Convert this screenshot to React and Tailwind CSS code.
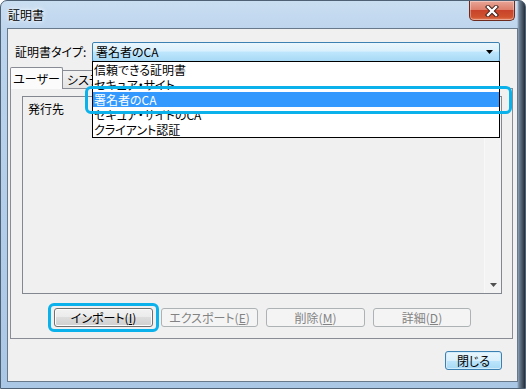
export default function App() {
  const items = ["信頼できる証明書", "セキュア・サイト", "署名者のCA", "セキュア・サイトのCA", "クライアント認証"];
  return (
    <div className="relative w-[526px] h-[389px] overflow-hidden rounded-t-[7px] border border-[#4e6175] bg-[linear-gradient(90deg,transparent_516px,#71859a_518px,#252e38_524px),linear-gradient(180deg,#cadef1_0%,#bcd4ed_8%,#aac7e6_100%)] font-['Noto_Sans_CJK_JP',sans-serif] text-[12px] text-black [font-feature-settings:'palt']">
      {/* title bar */}
      <div className="h-[27px] flex items-center pl-[7px]">
        <span className="text-[12px] leading-none [text-shadow:0_0_6px_#ffffff,0_0_3px_#ffffff]">証明書</span>
      </div>
      {/* close button */}
      <div className="absolute top-0 right-[10px] w-[46px] h-[20px] rounded-b-[5px] border border-t-0 border-[#6d2a1e] bg-[linear-gradient(#e8a597_0%,#dd7f6b_45%,#c8432a_50%,#d0532f_85%,#e3805e_100%)] flex items-center justify-center shadow-[inset_0_0_0_1px_rgba(255,255,255,0.35)]">
        <svg width="14" height="12" viewBox="0 0 14 12">
          <path d="M3 2 L11 10 M11 2 L3 10" stroke="#3b1b14" strokeWidth="4.2" strokeLinecap="square" fill="none" />
          <path d="M3 2 L11 10 M11 2 L3 10" stroke="#ffffff" strokeWidth="2.4" strokeLinecap="square" fill="none" />
        </svg>
      </div>

      {/* client area */}
      <div className="ml-[6px] w-[511px] h-[354px] border border-[#68798b] bg-[#f0f0f0] flex flex-col">
        {/* type row */}
        <div className="mt-[13px] flex items-center h-[20px]">
          <span className="ml-[7px] w-[77px] leading-none">証明書タイプ:</span>
          <div className="w-[408px] h-[20px] rounded-[2px] border border-[#3c7fb1] bg-[linear-gradient(#eaf6fd_0%,#d9f0fc_45%,#bee6fd_50%,#a7d9f5_100%)] flex items-center justify-between pl-[3px] pr-[6px]">
            <span className="leading-none">署名者のCA</span>
            <svg width="7" height="4" viewBox="0 0 7 4">
              <path d="M0 0 H7 L3.5 4 Z" fill="#000000" />
            </svg>
          </div>
        </div>

        {/* tabs */}
        <div className="mt-[5px] ml-[2px] h-[21px] flex items-start">
          <div className="relative z-10 w-[53px] h-[22px] border border-b-0 border-[#898c95] rounded-t-[2px] bg-[#fbfbfb] flex items-center justify-center">
            <span className="leading-none">ユーザー</span>
          </div>
          <div className="mt-[3px] w-[64px] h-[18px] border border-b-0 border-l-0 border-[#898c95] rounded-tr-[2px] bg-[linear-gradient(#f2f2f2,#e3e3e3)] flex items-center pl-[4px]">
            <span className="leading-none">システム</span>
          </div>
        </div>

        {/* tab panel */}
        <div className="ml-[2px] w-[503px] h-[251px] border border-[#898c95] bg-[#f0f0f0] flex flex-col">
          <div className="ml-[11px] mt-[7px] w-[480px] h-[198px] border border-[#828790] flex">
            <div className="flex-1 flex flex-col">
              <div className="h-[24px] flex items-center pl-[5px]">
                <span className="leading-none">発行先</span>
              </div>
            </div>
            <div className="w-[17px] h-full border-l border-[#f8f8f8] bg-[#f3f3f3] flex flex-col justify-end">
              <div className="h-[17px] flex items-center justify-center">
                <svg width="7" height="4" viewBox="0 0 7 4">
                  <path d="M0 0 H7 L3.5 4 Z" fill="#505050" />
                </svg>
              </div>
            </div>
          </div>

          <div className="mt-[14px] ml-[43px] flex gap-[8px]">
            <div className="w-[99px] h-[19px] rounded-[3px] border border-[#707070] bg-[linear-gradient(#f2f2f2_0%,#ebebeb_50%,#dddddd_50%,#cfcfcf_100%)] shadow-[inset_0_0_0_1px_#fcfcfc] flex items-center justify-center leading-none">
              <span>インポート(<span className="underline">I</span>)</span>
            </div>
            <div className="w-[97px] h-[19px] rounded-[3px] border border-[#adb2b5] bg-[#f4f4f4] text-[#838383] flex items-center justify-center leading-none">
              <span>エクスポート(<span className="underline">E</span>)</span>
            </div>
            <div className="w-[99px] h-[19px] rounded-[3px] border border-[#adb2b5] bg-[#f4f4f4] text-[#838383] flex items-center justify-center leading-none">
              <span>削除(<span className="underline">M</span>)</span>
            </div>
            <div className="w-[98px] h-[19px] rounded-[3px] border border-[#adb2b5] bg-[#f4f4f4] text-[#838383] flex items-center justify-center leading-none">
              <span>詳細(<span className="underline">D</span>)</span>
            </div>
          </div>
        </div>

        {/* bottom close button */}
        <div className="mt-[12px] flex justify-end pr-[15px]">
          <div className="w-[57px] h-[19px] rounded-[3px] border border-[#3c7fb1] bg-[linear-gradient(#eaf6fd_0%,#d9f0fc_50%,#bee6fd_50%,#a7d9f5_100%)] shadow-[inset_0_0_0_1px_#d2ecfb] flex items-center justify-center leading-none">
            <span>閉じる</span>
          </div>
        </div>
      </div>

      {/* dropdown list (overlay) */}
      <div className="absolute left-[91px] top-[60px] w-[408px] h-[77px] border border-black bg-white flex flex-col">
        {items.map((t, i) => (
          <div
            key={t}
            className={i === 2 ? "h-[15px] leading-[15px] pl-[1px] bg-[#3399ff] text-white" : "h-[15px] leading-[15px] pl-[1px]"}
          >
            {t}
          </div>
        ))}
      </div>

      {/* annotation highlights */}
      <div className="absolute left-[84px] top-[85px] w-[427px] h-[28px] border-[3px] border-[#0ab1ea] rounded-[6px]" />
      <div className="absolute left-[47px] top-[302px] w-[111px] h-[29px] border-[3px] border-[#0ab1ea] rounded-[6px]" />
    </div>
  );
}
